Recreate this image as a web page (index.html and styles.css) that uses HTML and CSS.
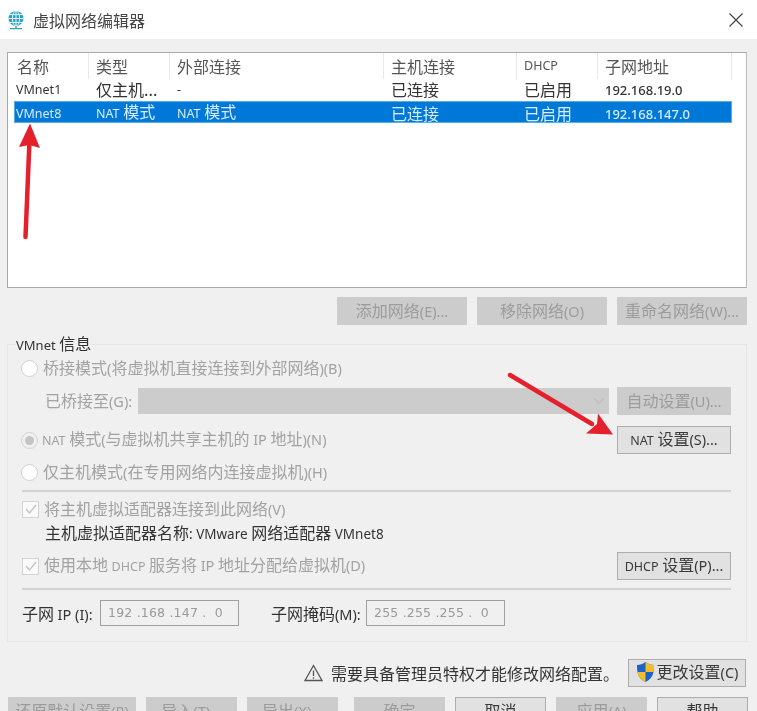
FILE: index.html
```html
<!DOCTYPE html>
<html lang="zh-CN">
<head>
<meta charset="utf-8">
<title>虚拟网络编辑器</title>
<link rel="stylesheet" href="styles.css">
</head>
<body>
<div class="dialog">
  <header class="titlebar">
    <svg class="app-icon" width="18" height="20" viewBox="0 0 18 20">
      <circle cx="9" cy="8.5" r="7.5" fill="#2f9fc0"/>
      <path d="M1.500 8.500h15M2.600 4.600h12.800M2.600 12.400h12.800M9 1v15" stroke="#e4f4f8" stroke-width="1" fill="none"/>
      <ellipse cx="9" cy="8.500" rx="3.600" ry="7.500" fill="none" stroke="#e4f4f8" stroke-width="1"/>
      <path d="M9 16v2M3 18.600h12" stroke="#3f9fb5" stroke-width="1.400" fill="none"/>
    </svg>
    <span class="title">虚拟网络编辑器</span>
    <svg class="close" width="14" height="14" viewBox="0 0 14 14"><path d="M.5.5l13 13M13.500.5l-13 13" stroke="#444" stroke-width="1.200" fill="none"/></svg>
  </header>

  <main class="content">
    <section class="list">
      <div class="row head">
        <span class="c1">名称</span><span class="c2">类型</span><span class="c3">外部连接</span><span class="c4">主机连接</span><span class="c5 l">DHCP</span><span class="c6">子网地址</span>
      </div>
      <div class="row">
        <span class="c1 l">VMnet1</span><span class="c2">仅主机...</span><span class="c3 l">-</span><span class="c4">已连接</span><span class="c5">已启用</span><span class="c6 l">192.168.19.0</span>
      </div>
      <div class="row selected">
        <span class="c1 l">VMnet8</span><span class="c2"><span class="l">NAT</span> 模式</span><span class="c3"><span class="l">NAT</span> 模式</span><span class="c4">已连接</span><span class="c5">已启用</span><span class="c6 l">192.168.147.0</span>
      </div>
    </section>

    <div class="net-actions">
      <button class="btn off w-net">添加网络<span class="k">(E)...</span></button>
      <button class="btn off w-net">移除网络<span class="k">(O)</span></button>
      <button class="btn off w-net">重命名网络<span class="k">(W)...</span></button>
    </div>

    <fieldset class="group">
      <legend class="legend"><span class="l">VMnet</span> 信息</legend>

      <div class="line r-bridge">
        <span class="radio"></span><span class="muted">桥接模式<span class="k">(</span>将虚拟机直接连接到外部网络<span class="k">)(B)</span></span>
      </div>

      <div class="line r-bridged-to">
        <span class="muted indent">已桥接至<span class="k">(G):</span></span>
        <div class="select"><svg width="14" height="8" viewBox="0 0 14 8"><path d="M1.500 1l5.500 5.500L12.500 1" stroke="#bdbdbd" stroke-width="1.200" fill="none"/></svg></div>
        <button class="btn off w-side">自动设置<span class="k">(U)...</span></button>
      </div>

      <div class="line r-nat">
        <span class="radio on"></span><span class="muted tight"><span class="l">NAT</span> 模式<span class="k">(</span>与虚拟机共享主机的 <span class="k">IP</span> 地址<span class="k">)(N)</span></span>
        <button class="btn w-side push"><span class="l">NAT</span> 设置<span class="k">(S)...</span></button>
      </div>

      <div class="line r-host">
        <span class="radio"></span><span class="muted">仅主机模式<span class="k">(</span>在专用网络内连接虚拟机<span class="k">)(H)</span></span>
      </div>

      <hr class="sep s1">

      <div class="line r-check">
        <span class="check"><svg width="14" height="12" viewBox="0 0 14 12"><path d="M2 6l3.500 4L12 2" stroke="#c4c4c4" stroke-width="1.400" fill="none"/></svg></span><span class="muted">将主机虚拟适配器连接到此网络<span class="k">(V)</span></span>
      </div>
      <div class="line r-name"><span class="indent name">主机虚拟适配器名称<span class="n">: VMware</span> 网络适配器 <span class="n">VMnet8</span></span></div>
      <div class="line r-dhcp">
        <span class="check"><svg width="14" height="12" viewBox="0 0 14 12"><path d="M2 6l3.500 4L12 2" stroke="#c4c4c4" stroke-width="1.400" fill="none"/></svg></span><span class="muted">使用本地 <span class="l">DHCP</span> 服务将 <span class="k">IP</span> 地址分配给虚拟机<span class="k">(D)</span></span>
        <button class="btn w-side push"><span class="l">DHCP</span> 设置<span class="k">(P)...</span></button>
      </div>

      <hr class="sep s2">

      <div class="line r-subnet">
        <span class="lab-ip">子网 <span class="k">IP (I):</span></span>
        <span class="ip">192 .168 .147 .&nbsp; 0</span>
        <span class="lab-mask">子网掩码<span class="k">(M):</span></span>
        <span class="ip">255 .255 .255 .&nbsp; 0</span>
      </div>
    </fieldset>

    <div class="notice">
      <svg width="19" height="18" viewBox="0 0 19 18"><path d="M9.500 1.500L18 16.500H1z" fill="none" stroke="#555" stroke-width="1.300"/><path d="M9.500 6.500v5.500M9.500 13.200v1.600" stroke="#555" stroke-width="1.300"/></svg>
      <span class="notice-text">需要具备管理员特权才能修改网络配置。</span>
      <button class="btn w-change"><svg class="shield" width="19" height="22" viewBox="0 0 19 22">
          <path d="M9.500 1C7 3 4 3.800 1 4c0 7 .5 13 8.500 17C17.500 17 18 11 18 4c-3-.2-6-1-8.500-3z" fill="#1d63c4"/>
          <path d="M9.500 1C12 3 15 3.800 18 4c0 2.500 0 5-.3 7H9.500z" fill="#f4bd2e"/>
          <path d="M9.500 11v10C4 18.200 2.200 14.800 1.500 11z" fill="#f4bd2e"/>
        </svg>更改设置<span class="k">(C)</span></button>
    </div>

    <div class="bottom">
      <button class="btn off w-reset">还原默认设置<span class="k">(R)</span></button>
      <button class="btn off w-mid">导入<span class="k">(T)...</span></button>
      <button class="btn off w-mid">导出<span class="k">(X)...</span></button>
      <button class="btn off w-mid gap-ok">确定</button>
      <button class="btn w-mid">取消</button>
      <button class="btn off w-mid">应用<span class="k">(A)</span></button>
      <button class="btn w-mid">帮助</button>
    </div>
  </main>

  <svg class="arrows" width="757" height="711" viewBox="0 0 757 711">
    <path d="M25.500 237L29.500 140" stroke="#e5202c" stroke-width="4.500" stroke-linecap="round" fill="none"/>
    <path d="M30 123.500L40 148L29.500 145L19 147z" fill="#e5202c"/>
    <path d="M510 375L592 424" stroke="#e5202c" stroke-width="4.500" stroke-linecap="round" fill="none"/>
    <path d="M613 434.500L586 433.500L597 424L598 413.500z" fill="#e5202c"/>
  </svg>
</div>
</body>
</html>
```
FILE: styles.css
```css
* { box-sizing: border-box; }
html, body { margin: 0; height: 711px; overflow: hidden; }
body {
  font-family: "Noto Sans CJK SC", "Noto Sans", sans-serif;
  font-size: 16px;
  line-height: 20px;
  color: #333;
  background: #f0f0f0;
}
.l { font-family: "Noto Sans", "Noto Sans CJK SC", sans-serif; font-size: 12.5px; }
.k { font-family: "Noto Sans", "Noto Sans CJK SC", sans-serif; font-size: 14.5px; }
.n { font-family: "Noto Sans", "Noto Sans CJK SC", sans-serif; font-size: 13.5px; }
.dialog { position: relative; width: 757px; height: 711px; filter: blur(0.45px); }

.titlebar { height: 39px; background: #fff; display: flex; align-items: center; padding: 0 14px 0 7px; }
.app-icon { flex: none; margin-right: 8px; }
.title { font-size: 16px; color: #444; flex: 1; }

.content { padding: 13px 10px 0 7px; }

.list { width: 740px; height: 236px; background: #fff; border: 1px solid #a9a9a9; border-right-color: #bbb; }
.row { display: grid; grid-template-columns: 75px 81px 214px 133px 81px 134px; margin-left: 6px; width: 718px; height: 22px; align-items: center; }
.row > span { white-space: nowrap; }
.row > span:not(.l) { padding-bottom: 2px; }
.row.head { height: 26px; color: #555; }
.row.head > span { height: 26px; line-height: 26px; padding-bottom: 0; border-right: 1px solid #e8e8e8; }
.row.head > .c1 { padding-left: 3px; }
.row .c2, .row .c3, .row .c4, .row .c5, .row .c6 { padding-left: 7px; }
.row .c1 { padding-left: 2px; }
.row .c6.l { font-size: 13px; font-weight: 500; }
.row.selected { background: #0078d7; color: #d8ecfb; box-shadow: 0 0 0 1px #55aee8 inset; }

.net-actions { display: flex; justify-content: flex-end; gap: 10px; margin-top: 9px; }

.btn {
  font: inherit; line-height: 20px; height: 28px; padding: 0 0 2px; white-space: nowrap; text-align: center;
  background: #e1e1e1; border: 1px solid #adadad; color: #3a3a3a; flex: none;
}
.btn.off { background: #cccccc; border-color: #cccccc; color: #9c9c9c; }
.w-net { width: 130px; }
.w-side { width: 114px; }
.w-change { width: 118px; }
.shield { margin-right: 2px; vertical-align: -5px; }
.w-reset { width: 128px; }
.w-mid { width: 91px; }

.group { margin: 10px 0 0; padding: 0 15px 0 14px; width: 740px; height: 307px; border: 1px solid #e6e6e6; min-width: 0; }
.legend { padding: 0; margin-left: -6px; line-height: 16px; color: #333; }
.legend .l { font-size: 13px; }

.line { display: flex; align-items: center; white-space: nowrap; }
.muted { color: #a2a2a2; padding-bottom: 2px; }
.name { padding-bottom: 2px; }
.tight { margin-left: -1px; }
.indent { margin-left: 23px; }
.push { margin-left: auto; }

.radio { width: 17px; height: 17px; border-radius: 50%; background: #fff; border: 1px solid #d0d0d0; margin: 0 5px 0 -1px; flex: none; position: relative; }
.radio.on { background: #f0f0f0; }
.radio.on::after { content: ""; position: absolute; inset: 3px; border-radius: 50%; background: #c4c4c4; }
.check { width: 17px; height: 17px; background: #fafafa; border: 1px solid #d4d4d4; margin-right: 5px; flex: none; display: flex; align-items: center; justify-content: center; }

.r-bridge { height: 32px; margin-top: -1px; }
.r-bridged-to { height: 28px; margin-top: 3px; }
.r-bridged-to .muted { width: 93px; flex: none; }
.r-nat { height: 28px; margin-top: 11px; }
.r-host { height: 28px; margin-top: 4px; }
.r-check { height: 24px; margin-top: 5px; }
.r-name { height: 24px; margin-top: 1px; }
.r-dhcp { height: 28px; margin-top: 6px; }
.r-subnet { height: 26px; margin-top: 10px; }

.select { width: 471px; height: 26px; margin-right: 8px; background: #cccccc; flex: none; display: flex; align-items: center; justify-content: flex-end; padding-right: 3px; }

.sep { border: 0; height: 2px; background: #d2d2d2; margin: 0; }
.s1 { margin-top: 4px; width: 709px; }
.s2 { margin-top: 8px; width: 709px; }

.lab-ip { width: 78px; flex: none; }
.lab-mask { width: 95px; margin-left: 32px; flex: none; }
.ip { width: 139px; height: 26px; border: 1px solid #a0a0a0; flex: none; padding-left: 7px; line-height: 24px; font-family: "DejaVu Sans", sans-serif; font-size: 12.5px; letter-spacing: .2px; color: #9a9a9a; }

.notice { display: flex; align-items: center; justify-content: flex-end; height: 28px; margin-top: 17px; width: 739px; }
.notice > svg { margin-right: 8px; }
.notice-text { margin-right: 9px; color: #333; }

.bottom { display: flex; gap: 10px; margin-top: 10px; margin-left: 1px; width: 738px; }
.bottom .gap-ok { margin-left: 6px; }

.arrows { position: absolute; inset: 0; pointer-events: none; }
```
